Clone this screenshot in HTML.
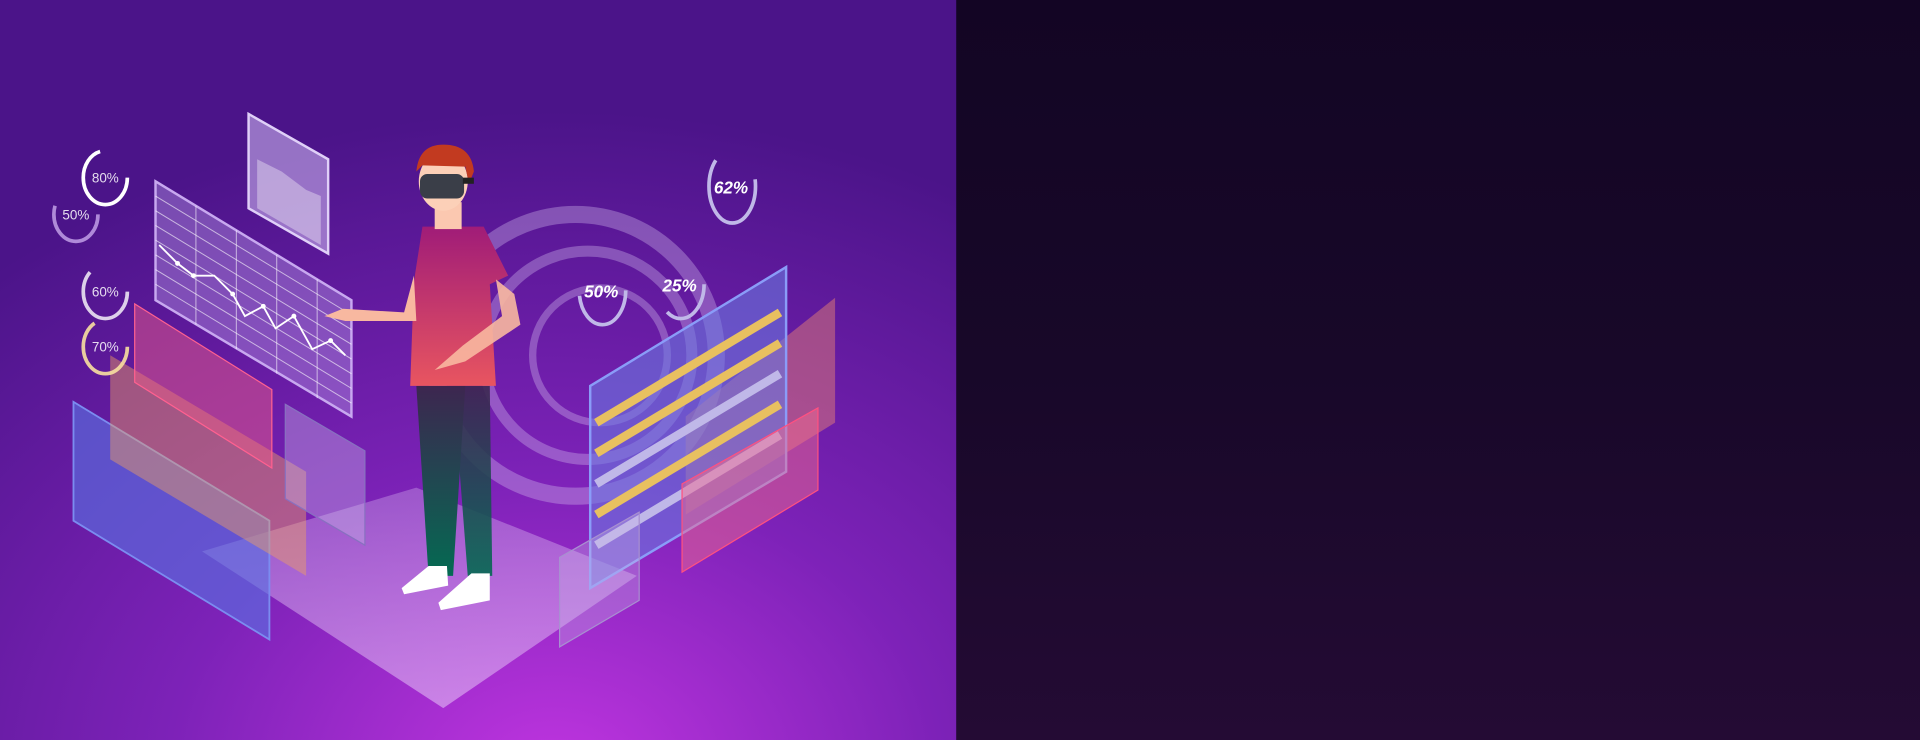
<!DOCTYPE html>
<html><head><meta charset="utf-8"><style>
html,body{margin:0;padding:0;width:1920px;height:740px;overflow:hidden;background:#150626}
svg{display:block}
text{font-family:"Liberation Sans",sans-serif}
</style></head><body>
<svg width="1920" height="740" viewBox="0 0 1568 604" preserveAspectRatio="none" xmlns="http://www.w3.org/2000/svg">
<defs>
<radialGradient id="bgL" cx="0.58" cy="1.05" r="0.9">
<stop offset="0" stop-color="#c035e0"/><stop offset="0.45" stop-color="#7d22b8"/><stop offset="1" stop-color="#4b1489"/>
</radialGradient>
<linearGradient id="bgR" x1="0" y1="0" x2="0" y2="1">
<stop offset="0" stop-color="#130524"/><stop offset="0.5" stop-color="#180829"/><stop offset="1" stop-color="#240b34"/>
</linearGradient>
<linearGradient id="shirt" x1="0" y1="0" x2="0" y2="1"><stop offset="0" stop-color="#a01c78"/><stop offset="1" stop-color="#e85560"/></linearGradient>
<linearGradient id="pants" x1="0" y1="0" x2="0" y2="1"><stop offset="0" stop-color="#3d2650"/><stop offset="1" stop-color="#046a52"/></linearGradient>
<linearGradient id="floor" x1="0" y1="0" x2="0" y2="1"><stop offset="0" stop-color="#d9b8f0" stop-opacity="0.35"/><stop offset="1" stop-color="#e8c8f8" stop-opacity="0.55"/></linearGradient>
</defs>
<rect x="0" y="0" width="781" height="604" fill="url(#bgL)"/>
<rect x="781" y="0" width="787" height="604" fill="url(#bgR)"/>

<polygon points="165,450 340,398 520,470 362,578" fill="url(#floor)"/>
<g fill="none" stroke="#d8c4f0" stroke-opacity="0.35">
<circle cx="470" cy="290" r="115" stroke-width="14"/>
<circle cx="480" cy="290" r="85" stroke-width="9"/>
<circle cx="490" cy="290" r="55" stroke-width="6"/>
</g>
<polygon points="60,328 220,425 220,522 60,425" fill="#5b6ee0" fill-opacity="0.65" stroke="#7b8cf0" stroke-width="1.5"/>
<polygon points="90,290 250,385 250,470 90,375" fill="#f0a060" fill-opacity="0.45"/>
<polygon points="110,248 222,318 222,382 110,312" fill="#e85a8a" fill-opacity="0.5" stroke="#ff6090" stroke-width="1"/>
<polygon points="233,330 298,368 298,445 233,407" fill="#c8b4e8" fill-opacity="0.4" stroke="#8870c0"/>
<polygon points="127,148 287,245 287,340 127,245" fill="#b090e0" fill-opacity="0.45" stroke="#c8a8f0" stroke-width="2"/>
<g stroke="#fff" stroke-opacity="0.6" stroke-width="0.8">
<line x1="127" y1="160" x2="287" y2="257"/><line x1="127" y1="172" x2="287" y2="269"/><line x1="127" y1="184" x2="287" y2="281"/><line x1="127" y1="196" x2="287" y2="293"/><line x1="127" y1="208" x2="287" y2="305"/><line x1="127" y1="220" x2="287" y2="317"/><line x1="127" y1="232" x2="287" y2="329"/>
<line x1="160" y1="168" x2="160" y2="265"/><line x1="193" y1="188" x2="193" y2="285"/><line x1="226" y1="208" x2="226" y2="305"/><line x1="259" y1="228" x2="259" y2="325"/>
</g>
<polyline points="130,200 145,215 158,225 175,225 190,240 200,258 215,250 225,268 240,258 255,285 270,278 282,290" fill="none" stroke="#fff" stroke-width="1.5"/>
<g fill="#fff"><circle cx="145" cy="215" r="2"/><circle cx="158" cy="225" r="2"/><circle cx="190" cy="240" r="2"/><circle cx="215" cy="250" r="2"/><circle cx="240" cy="258" r="2"/><circle cx="270" cy="278" r="2"/></g>
<polygon points="203,93 268,130 268,207 203,170" fill="#c8b0ec" fill-opacity="0.6" stroke="#e0d0f8" stroke-width="2"/>
<polygon points="210,130 230,140 250,155 262,160 262,200 210,170" fill="#fff" fill-opacity="0.35"/>

<polygon points="560,340 682,243 682,345 560,420" fill="#f08a70" fill-opacity="0.45"/>
<polygon points="482,315 642,218 642,385 482,480" fill="#6a78e0" fill-opacity="0.6" stroke="#8a9cf8" stroke-width="2"/>
<g stroke-width="7">
<line x1="487" y1="345" x2="637" y2="255" stroke="#e8c060"/>
<line x1="487" y1="370" x2="637" y2="280" stroke="#e8c060"/>
<line x1="487" y1="395" x2="637" y2="305" stroke="#c0b8e8"/>
<line x1="487" y1="420" x2="637" y2="330" stroke="#e8c060"/>
<line x1="487" y1="445" x2="637" y2="355" stroke="#c0b8e8"/>
</g>
<polygon points="557,395 668,333 668,400 557,467" fill="#f06a90" fill-opacity="0.5" stroke="#ff5080"/>
<polygon points="457,455 522,418 522,490 457,528" fill="#c8b4e8" fill-opacity="0.35" stroke="#a890d0"/>

<g fill="none" stroke-width="3">
<ellipse cx="86" cy="145" rx="18" ry="22" stroke="#fff" stroke-dasharray="90 40"/>
<ellipse cx="62" cy="175" rx="18" ry="22" stroke="#c8a8ec" stroke-opacity="0.8" stroke-dasharray="70 60"/>
<ellipse cx="86" cy="238" rx="18" ry="22" stroke="#fff" stroke-opacity="0.8" stroke-dasharray="80 50"/>
<ellipse cx="86" cy="283" rx="18" ry="22" stroke="#f8e0a0" stroke-opacity="0.9" stroke-dasharray="85 45"/>
<ellipse cx="598" cy="152" rx="19" ry="30" stroke="#c0b8e8" stroke-dasharray="100 50"/>
<ellipse cx="492" cy="237" rx="19" ry="28" stroke="#c0b8e8" stroke-dasharray="70 80"/>
<ellipse cx="556" cy="232" rx="19" ry="28" stroke="#c0b8e8" stroke-dasharray="50 100"/>
</g>
<g fill="#fff" font-size="11" fill-opacity="0.85">
<text x="75" y="149">80%</text><text x="51" y="179">50%</text><text x="75" y="242">60%</text><text x="75" y="287">70%</text>
</g>
<g fill="#fff" font-size="14" font-weight="bold" font-style="italic">
<text x="583" y="158">62%</text><text x="477" y="243">50%</text><text x="541" y="238">25%</text>
</g>

<polygon points="340,315 380,315 370,470 350,470" fill="url(#pants)"/>
<polygon points="370,315 400,315 402,470 382,470" fill="url(#pants)" opacity="0.9"/>
<path d="M350,462 L365,462 L366,478 L330,485 L328,480 Z" fill="#fff"/>
<path d="M385,468 L400,468 L400,490 L360,498 L358,492 Z" fill="#fff"/>
<path d="M345,185 L395,185 L415,225 L400,232 L405,315 L335,315 L338,230 Z" fill="url(#shirt)"/>
<path d="M338,225 L330,255 L280,252 L265,258 L282,262 L340,262 Z" fill="#f8b8a0"/>
<path d="M405,228 L420,240 L425,265 L380,295 L355,302 L378,282 L410,258 Z" fill="#f8b8a0" opacity="0.9"/>
<rect x="355" y="165" width="22" height="22" fill="#fbc8b0"/>
<ellipse cx="362" cy="148" rx="20" ry="24" fill="#fcd0b8"/>
<path d="M340,140 Q342,118 362,118 Q385,118 387,140 L383,150 L380,136 L345,135 Z" fill="#c23a20"/>
<rect x="343" y="142" width="36" height="20" rx="6" fill="#3a3e48"/>
<rect x="378" y="145" width="9" height="5" fill="#222"/>
</svg>
</body></html>
